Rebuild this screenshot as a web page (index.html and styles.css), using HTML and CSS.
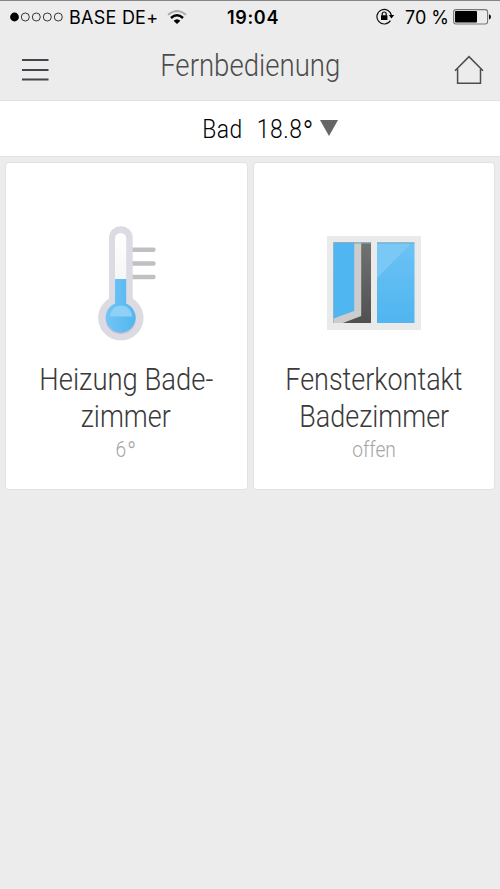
FILE: index.html
```html
<!DOCTYPE html>
<html lang="de">
<head>
<meta charset="utf-8">
<title>Fernbedienung</title>
<link rel="stylesheet" href="styles.css">
</head>
<body>
<header class="top">
  <div class="status">
    <div class="status-left">
      <svg class="signal" width="54" height="10" viewBox="0 0 54 10"><circle cx="4.500" cy="5" r="4.400"/><g fill="none" stroke="#222" stroke-width=".9"><circle cx="15.300" cy="5" r="4"/><circle cx="26.300" cy="5" r="4"/><circle cx="37.300" cy="5" r="4"/><circle cx="48.300" cy="5" r="4"/></g></svg>
      <span class="carrier">BASE DE+</span>
      <svg class="wifi" width="20" height="14" viewBox="0 0 20 14" fill="none" stroke-width="2"><path d="M1 4.700Q10-2.700 19 4.700" stroke="#aaa"/><path d="M4 8Q10 2.400 16 8" stroke="#000" stroke-width="2.400"/><path d="M6.600 10.700Q10 7.700 13.400 10.700L10 14Z" fill="#000"/></svg>
    </div>
    <span class="clock">19:04</span>
    <div class="status-right">
      <svg class="lock" width="19" height="17" viewBox="0 0 19 17"><path d="M14.400 12.600A7.300 7.300 0 1 1 15.500 8" fill="none" stroke="#111" stroke-width="1.200"/><path d="M12.800 7h5.400l-2.700 3.600zM5 7.300h6.400v4.600H5z"/><path d="M6.200 7.500V6a2 2 0 0 1 4 0v1.500" fill="none" stroke="#000" stroke-width="1.200"/></svg>
      <span class="percent">70 %</span>
      <svg class="battery" width="38" height="16" viewBox="0 0 38 16"><rect x=".6" y=".6" width="34" height="14.400" rx="2.500" fill="none" stroke="#777" stroke-width="1.100"/><rect x="2" y="2" width="22" height="11.600" rx="1"/><path d="M36 5.200q2 .5 2 2.600t-2 2.600z"/></svg>
    </div>
  </div>
  <nav class="nav">
    <svg class="menu" width="28" height="24" viewBox="0 0 28 24" stroke="#44444c" stroke-width="1.900"><path d="M1 2h26.500M1 12h26.500M1 21.500h26.500"/></svg>
    <h1 class="title"><span class="narrow">Fernbedienung</span></h1>
    <svg class="home" width="30" height="30" viewBox="0 0 30 30" fill="none" stroke="#4c4c4c" stroke-width="1.500"><path d="M1 15.800 15 1.600 29 15.800M3.600 14v14.300h22.900V14"/></svg>
  </nav>
</header>
<div class="room"><span class="narrow">Bad&nbsp; 18.8<span class="degree">°</span></span><svg class="caret" width="18" height="16" viewBox="0 0 18 16"><path d="M0 0h18L9 16z" fill="#666"/></svg></div>
<main class="cards">
  <article class="card">
    <div class="picture">
      <svg class="thermometer" width="60" height="116" viewBox="0 0 60 116">
        <defs>
          <linearGradient id="glass" x2="0" y2="1"><stop stop-color="#fff"/><stop offset="1" stop-color="#f3f3f3"/></linearGradient>
          <linearGradient id="bulb"><stop stop-color="#73c5f5"/><stop offset="1" stop-color="#51b6f1"/></linearGradient>
        </defs>
        <path d="M34 24.800h22.500M34 38.500h22.500M34 52h22.500" stroke="#c0c0c4" stroke-width="4.400" stroke-linecap="round"/>
        <path d="M12 13a11.800 11.800 0 0 1 23.700 0v60.500a22.700 22.700 0 1 1-23.700 0z" fill="#dcdbe3"/>
        <path d="M18 13.500a5.600 5.600 0 0 1 11.200 0V66H18z" fill="url(#glass)"/>
        <circle cx="23.800" cy="94" r="15" fill="#b9bdce"/>
        <path d="M18 54h11.200v24.500a15 15 0 1 1-11.200 0z" fill="url(#bulb)"/>
        <path d="M13 91.500a11 11 0 0 1 22 0z" fill="#8ed0f6"/>
      </svg>
    </div>
    <h2 class="name name-heating"><span class="narrow">Heizung Bade-</span><span class="narrow">zimmer</span></h2>
    <p class="state"><span class="narrow">6<span class="degree">°</span></span></p>
  </article>
  <article class="card">
    <div class="picture">
      <svg class="window" width="94" height="94" viewBox="0 0 94 94">
        <defs>
          <linearGradient id="dark" x2="0" y2="1"><stop stop-color="#727272"/><stop offset="1" stop-color="#505050"/></linearGradient>
          <linearGradient id="pane" x2="0" y2="1"><stop stop-color="#6cc2f4"/><stop offset="1" stop-color="#50b5f0"/></linearGradient>
        </defs>
        <path d="M0 0h94v94H0z" fill="#eaeaea"/>
        <path d="M6.500 6.500h37.500v80.500H6.500z" fill="url(#dark)"/>
        <path d="M6.500 6.500h27.700v73.500L16 87H6.500z" fill="#ccc"/>
        <path d="M6.500 6.500h20.700v68.500L6.500 82.500z" fill="#50b6f1"/>
        <path d="M50 6.500h37.500v80.500H50z" fill="url(#pane)"/>
        <path d="M50 6.500h35L50 42z" fill="#7ac8f5"/>
        <path d="M6.500 7h37.500M50 7h37.500" stroke="#7ba7bf"/>
      </svg>
    </div>
    <h2 class="name name-window"><span class="narrow">Fensterkontakt</span><span class="narrow">Badezimmer</span></h2>
    <p class="state"><span class="narrow">offen</span></p>
  </article>
</main>
</body>
</html>
```
FILE: styles.css
```css
* { box-sizing: border-box; }
body {
  margin: 0;
  min-height: 889px;
  background: #ececec;
  color: #3a3a3a;
  font-family: Roboto, "Liberation Sans", sans-serif;
  font-weight: 300;
}
svg { display: block; flex: none; }
h1, h2, p { margin: 0; font-weight: 300; }
.narrow { display: inline-block; white-space: nowrap; transform: scaleX(.87); }
.top { height: 101px; border-top: 1px solid #858585; border-bottom: 1px solid #e2e2e2; }
.status {
  display: grid;
  grid-template-columns: 1fr auto 1fr;
  align-items: center;
  height: 32px;
  padding: 0 9px 0 10px;
  color: #000;
  font-family: Inter, sans-serif;
  font-size: 18px;
  font-weight: 400;
}
.status-left, .status-right { display: flex; align-items: center; }
.carrier { margin-left: 5px; white-space: nowrap; letter-spacing: .25px; }
.wifi { margin-left: 9px; }
.clock { font-weight: 600; letter-spacing: .7px; padding-left: 5px; }
.status-right { justify-content: flex-end; }
.percent { margin: 0 4px 0 10px; white-space: nowrap; }
.lock { margin-bottom: 1px; }
.nav { display: flex; justify-content: space-between; align-items: center; height: 67px; padding: 0 16px 0 21px; }
.menu { margin-top: 6px; }
.home { margin-top: 6px; }
.title { margin: 0 2px 2px 0; color: #4c4c4c; font-size: 31px; line-height: 36px; }
.title .narrow { transform: scaleX(.89); }
.room { display: flex; justify-content: center; align-items: center; height: 56px; padding: 2px 0 0 25px; background: #fff; border-bottom: 1px solid #e2e2e2; color: #000; font-size: 26px; }
.room .narrow { transform: scaleX(.88); transform-origin: right; letter-spacing: .6px; word-spacing: 1px; }
.room .degree { font-size: 33px; line-height: 26px; vertical-align: -6px; }
.caret { margin-left: 6px; margin-bottom: 3px; }
.cards { display: grid; grid-template-columns: 1fr 1fr; gap: 5px; padding: 5px; }
.card { height: 328px; background: #fff; border: 1px solid #e2e2e2; border-radius: 4px; text-align: center; }
.picture { display: flex; justify-content: center; align-items: center; height: 198px; padding-top: 42px; }
.thermometer { margin-left: 2px; }
.window { margin-left: 1px; }
.name { display: flex; flex-direction: column; align-items: center; font-size: 31px; line-height: 37px; }
.name-heating .narrow:first-child { transform: scaleX(.885); }
.state { font-size: 22px; line-height: 30px; color: #a5a5a5; }
.state .degree { font-size: 28px; line-height: 22px; vertical-align: -5px; padding-left: 1px; }
```
